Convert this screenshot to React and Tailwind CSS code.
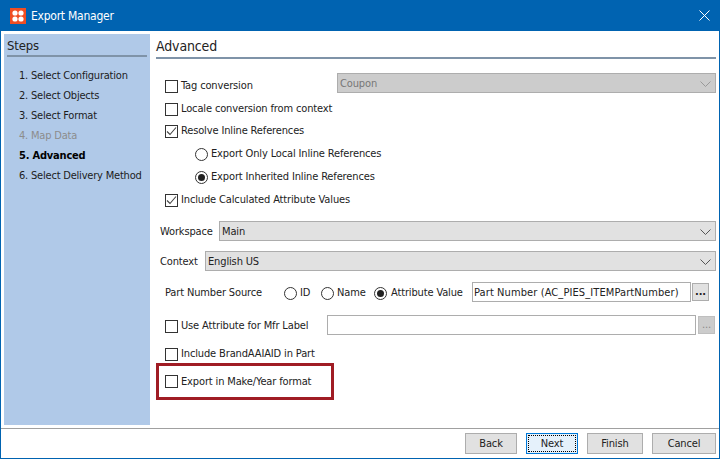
import React from 'react'

const steps = [
  { label: '1. Select Configuration', cls: 'text-[#1c1c1c]' },
  { label: '2. Select Objects', cls: 'text-[#1c1c1c]' },
  { label: '3. Select Format', cls: 'text-[#1c1c1c]' },
  { label: '4. Map Data', cls: 'text-[#8c8c8c]' },
  { label: '5. Advanced', cls: 'font-bold text-black' },
  { label: '6. Select Delivery Method', cls: 'text-[#1c1c1c]' },
]

const Check = ({ checked }) => (
  <span className="flex h-[13px] w-[13px] shrink-0 items-center justify-center border border-[#333] bg-white">
    {checked && (
      <svg width="11" height="11" viewBox="0 0 11 11" fill="none">
        <path d="M1 5.5 L4 8.5 L10 1.5" stroke="#444" strokeWidth="1.1" />
      </svg>
    )}
  </span>
)

const Radio = ({ checked }) => (
  <span className="flex h-[13px] w-[13px] shrink-0 items-center justify-center rounded-full border border-[#333] bg-white">
    {checked && <span className="h-[7px] w-[7px] rounded-full bg-[#222]" />}
  </span>
)

const CheckRow = ({ checked, children, className = '' }) => (
  <div className={`flex h-[14px] items-center gap-[3px] ${className}`}>
    <Check checked={checked} />
    <span>{children}</span>
  </div>
)

const Chevron = ({ color = '#555' }) => (
  <svg width="11" height="6" viewBox="0 0 11 6" fill="none" className="shrink-0">
    <path d="M0.5 0.5 L5.5 5.5 L10.5 0.5" stroke={color} strokeWidth="1" />
  </svg>
)

const Select = ({ value, disabled, className = '' }) => (
  <div className={`flex h-[20px] items-center justify-between border border-[#adadad] pl-[2px] pr-[4px] pt-[2px] ${disabled ? 'bg-[#cccccc] text-[#777]' : 'bg-[#e1e1e1]'} ${className}`}>
    <span>{value}</span>
    <Chevron color={disabled ? '#999' : '#555'} />
  </div>
)

const FootButton = ({ children, className = '' }) => (
  <button className={`h-[21px] border border-[#adadad] bg-[#e1e1e1] ${className}`}>{children}</button>
)

export default function App() {
  return (
    <div className="flex h-[459px] w-[720px] flex-col overflow-hidden whitespace-nowrap border-x border-b border-[#0063b1] bg-white text-[11px] leading-[14px] tracking-[-0.14px] text-[#222] font-stretch-condensed [font-family:'DejaVu_Sans',sans-serif]">
      <div className="flex h-[31px] shrink-0 items-center bg-[#0063b1] pl-[9px] pr-[9px] text-white">
        <svg width="16" height="16" viewBox="0 0 16 16">
          <rect width="16" height="16" fill="#f04e23" />
          <g fill="#fff">
            <circle cx="5" cy="5" r="2.6" />
            <circle cx="11" cy="5" r="2.6" />
            <circle cx="5" cy="11" r="2.6" />
            <circle cx="11" cy="11" r="2.6" />
          </g>
        </svg>
        <span className="ml-[5px] text-[12px] tracking-[-0.25px]">Export Manager</span>
        <svg width="11" height="11" viewBox="0 0 11 11" className="ml-auto" stroke="#fff" strokeWidth="1">
          <path d="M0.5 0.5 L10.5 10.5 M10.5 0.5 L0.5 10.5" />
        </svg>
      </div>

      <div className="flex flex-1 pl-[3px] pt-[3px]">
        <aside className="h-[391px] w-[146px] shrink-0 bg-[#b0c9e8] px-[3px] pt-[3px]">
          <div className="h-[20px] border-b-[2px] border-[#7f93a8] text-[13px] leading-[17px]">Steps</div>
          <ul className="mt-[12px] flex flex-col gap-[6px] pl-[12px] tracking-[-0.2px]">
            {steps.map((s) => (
              <li key={s.label} className={s.cls}>{s.label}</li>
            ))}
          </ul>
        </aside>

        <main className="ml-[6px] w-[560px] pt-[3px]">
          <div className="h-[22px] border-b-[2px] border-[#7f93a8] text-[14px] leading-[18px]">Advanced</div>

          <div className="ml-[9px] mt-[14px] flex h-[20px] items-start">
            <div className="mt-[6px] flex w-[172px] items-center gap-[3px]">
              <Check />
              <span>Tag conversion</span>
            </div>
            <Select value="Coupon" disabled className="w-[379px]" />
          </div>

          <CheckRow className="ml-[9px] mt-[9px]">Locale conversion from context</CheckRow>
          <CheckRow checked className="ml-[9px] mt-[8px]">Resolve Inline References</CheckRow>

          <div className="ml-[39px] mt-[9px] flex h-[14px] items-center gap-[3px]">
            <Radio />
            <span>Export Only Local Inline References</span>
          </div>
          <div className="ml-[39px] mt-[9px] flex h-[14px] items-center gap-[3px]">
            <Radio checked />
            <span>Export Inherited Inline References</span>
          </div>

          <CheckRow checked className="ml-[9px] mt-[9px]">Include Calculated Attribute Values</CheckRow>

          <div className="ml-[4px] mt-[14px] flex h-[20px] items-center">
            <span className="w-[59px] pt-[2px]">Workspace</span>
            <Select value="Main" className="w-[497px]" />
          </div>

          <div className="ml-[4px] mt-[10px] flex h-[20px] items-center">
            <span className="w-[45px] pt-[2px]">Context</span>
            <Select value="English US" className="w-[511px]" />
          </div>

          <div className="ml-[9px] mt-[11px] flex h-[20px] items-center">
            <div className="flex items-center pt-[2px]">
              <span className="w-[119px]">Part Number Source</span>
              <Radio />
              <span className="ml-[3px] w-[21px]">ID</span>
              <Radio />
              <span className="ml-[3px] w-[37px]">Name</span>
              <Radio checked />
              <span className="ml-[4px] w-[81px]">Attribute Value</span>
            </div>
            <div className="flex h-[20px] w-[219px] items-center border border-[#adadad] pl-[1px] pt-[2px] tracking-[0.1px]">Part Number (AC_PIES_ITEMPartNumber)</div>
            <button className="ml-[1px] h-[18px] w-[17px] border border-[#adadad] bg-[#e1e1e1] text-[11px] font-bold leading-[14px]">...</button>
          </div>

          <div className="ml-[9px] mt-[13px] flex h-[20px] items-center">
            <div className="flex w-[162px] items-center gap-[3px] pt-[2px]">
              <Check />
              <span>Use Attribute for Mfr Label</span>
            </div>
            <div className="h-[20px] w-[369px] border border-[#adadad]" />
            <button className="ml-[2px] h-[18px] w-[17px] border border-[#bfbfbf] bg-[#cccccc] text-[11px] leading-[14px] text-[#888]">...</button>
          </div>

          <CheckRow className="ml-[9px] mt-[12px]">Include BrandAAIAID in Part</CheckRow>

          <div className="mt-[2px] flex h-[37px] w-[178px] items-center gap-[3px] border-[3px] border-[#a01c24] pl-[6px]">
            <Check />
            <span>Export in Make/Year format</span>
          </div>
        </main>
      </div>

      <div className="flex h-[30px] shrink-0 items-start gap-[9px] border-t border-[#a0a0a0] pl-[464px] pt-[4px] text-[#222]">
        <FootButton className="w-[52px]">Back</FootButton>
        <button className="flex h-[21px] w-[52px] items-center justify-center border border-[#0078d7] bg-[#e5f1fb] p-[1px]">
          <span className="flex h-full w-full items-center justify-center border border-dotted border-black">Next</span>
        </button>
        <FootButton className="w-[56px]">Finish</FootButton>
        <FootButton className="w-[64px]">Cancel</FootButton>
      </div>
    </div>
  )
}
